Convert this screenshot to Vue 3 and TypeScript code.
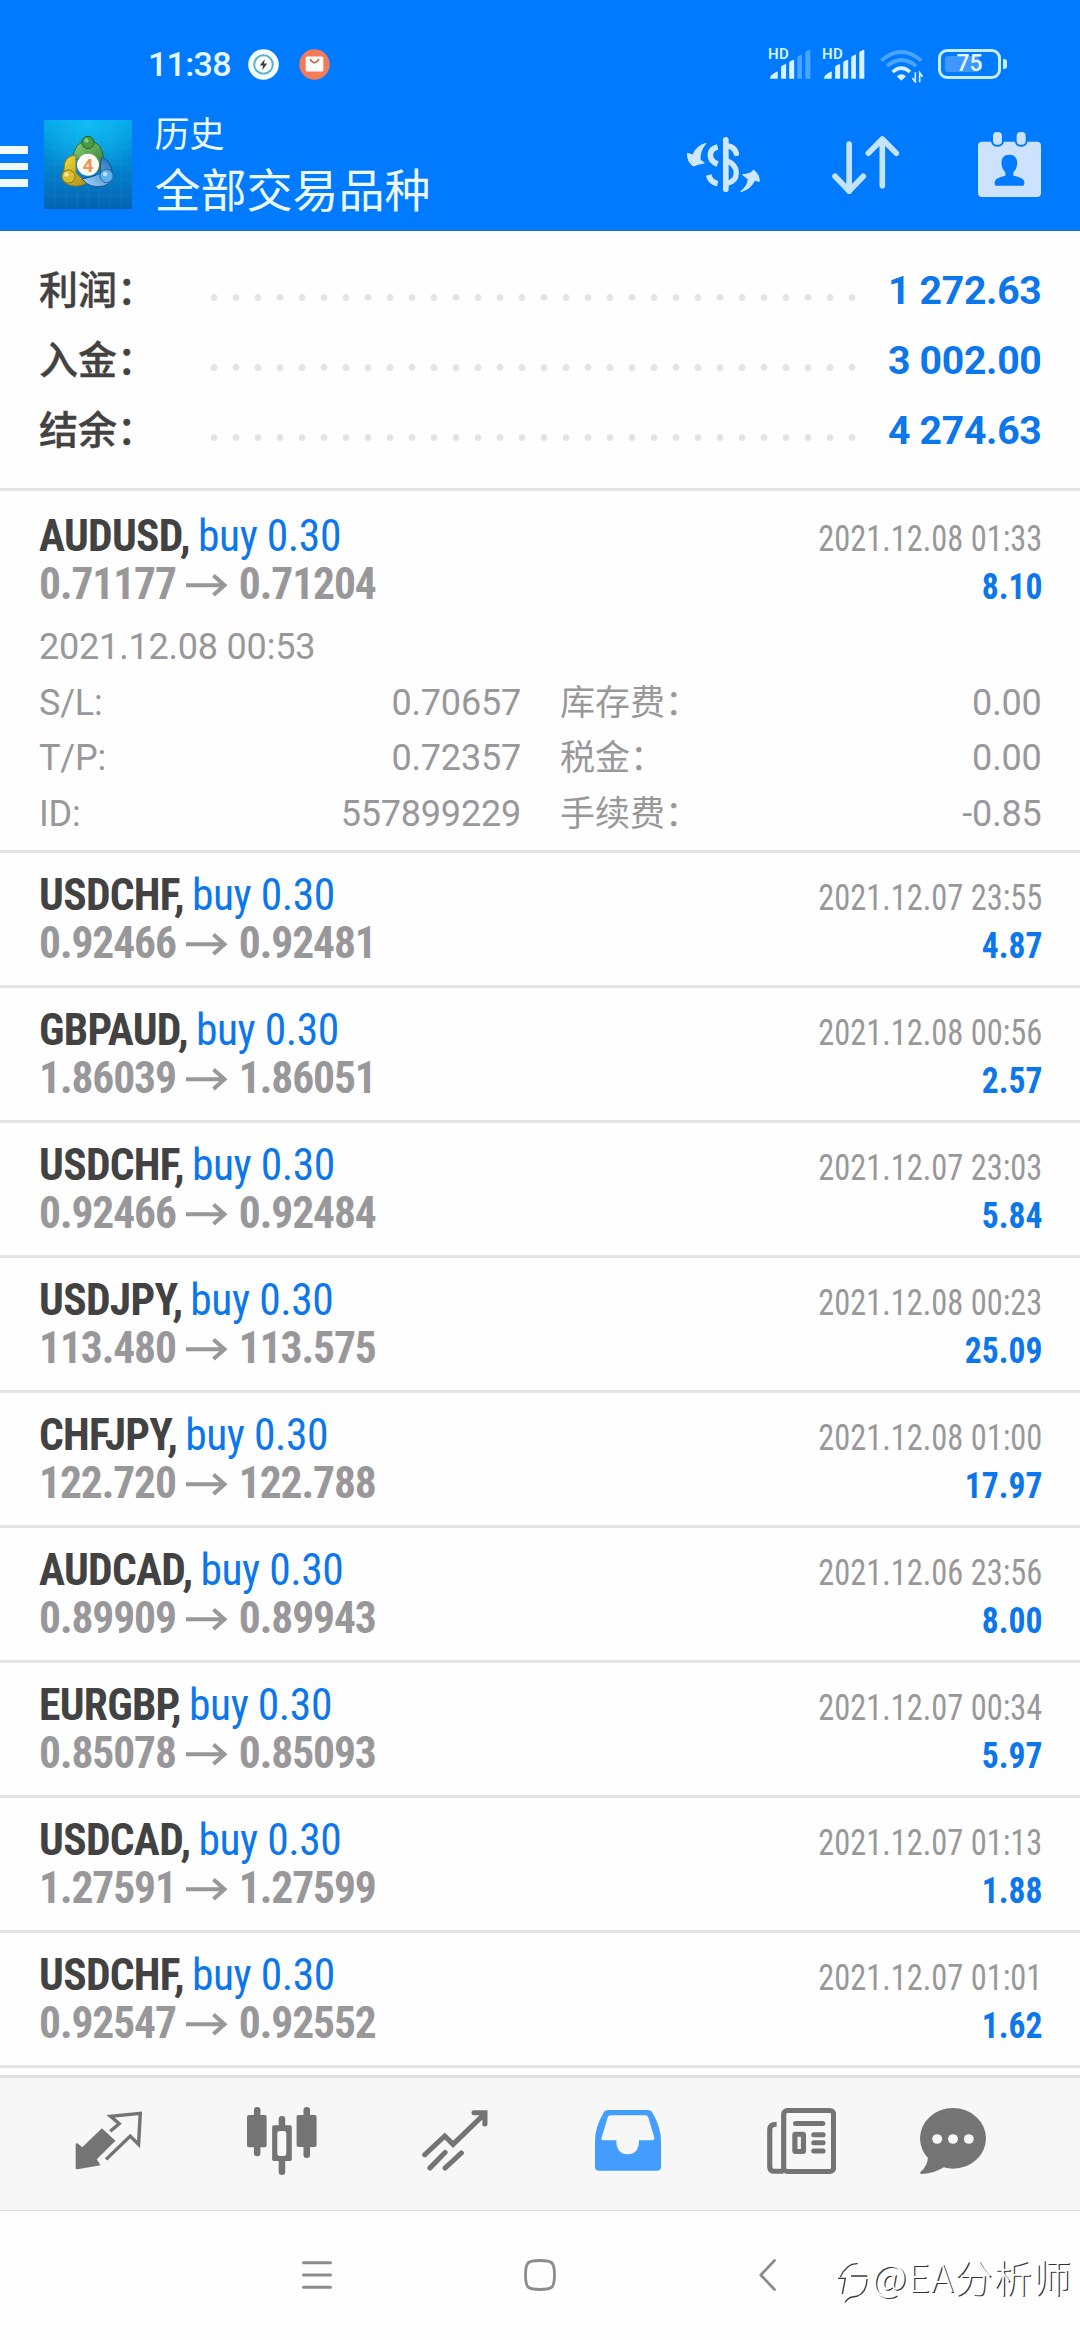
<script setup lang="ts">
interface Deal {
  symbol: string
  side: string
  open: string
  close: string
  time: string
  profit: string
}

interface Detail {
  label: string
  value: string
  label2: string
  value2: string
}

const totals: { label: string; value: string }[] = [
  { label: '利润：', value: '1 272.63' },
  { label: '入金：', value: '3 002.00' },
  { label: '结余：', value: '4 274.63' },
]

const deals: Deal[] = [
  { symbol: 'AUDUSD', side: 'buy 0.30', open: '0.71177', close: '0.71204', time: '2021.12.08 01:33', profit: '8.10' },
  { symbol: 'USDCHF', side: 'buy 0.30', open: '0.92466', close: '0.92481', time: '2021.12.07 23:55', profit: '4.87' },
  { symbol: 'GBPAUD', side: 'buy 0.30', open: '1.86039', close: '1.86051', time: '2021.12.08 00:56', profit: '2.57' },
  { symbol: 'USDCHF', side: 'buy 0.30', open: '0.92466', close: '0.92484', time: '2021.12.07 23:03', profit: '5.84' },
  { symbol: 'USDJPY', side: 'buy 0.30', open: '113.480', close: '113.575', time: '2021.12.08 00:23', profit: '25.09' },
  { symbol: 'CHFJPY', side: 'buy 0.30', open: '122.720', close: '122.788', time: '2021.12.08 01:00', profit: '17.97' },
  { symbol: 'AUDCAD', side: 'buy 0.30', open: '0.89909', close: '0.89943', time: '2021.12.06 23:56', profit: '8.00' },
  { symbol: 'EURGBP', side: 'buy 0.30', open: '0.85078', close: '0.85093', time: '2021.12.07 00:34', profit: '5.97' },
  { symbol: 'USDCAD', side: 'buy 0.30', open: '1.27591', close: '1.27599', time: '2021.12.07 01:13', profit: '1.88' },
  { symbol: 'USDCHF', side: 'buy 0.30', open: '0.92547', close: '0.92552', time: '2021.12.07 01:01', profit: '1.62' },
]

const openedAt = '2021.12.08 00:53'
const details: Detail[] = [
  { label: 'S/L:', value: '0.70657', label2: '库存费：', value2: '0.00' },
  { label: 'T/P:', value: '0.72357', label2: '税金：', value2: '0.00' },
  { label: 'ID:', value: '557899229', label2: '手续费：', value2: '-0.85' },
]
</script>

<template>
  <div class="screen">
    <header class="header">
      <div class="status">
        <span class="clock">11:38</span>
        <svg class="st-charge" width="31" height="31" viewBox="0 0 31 31">
          <circle cx="15.5" cy="15.5" r="15.3" fill="#f3fdff" />
          <circle cx="15.5" cy="15.5" r="9.3" fill="#fff" stroke="#5bb5c4" stroke-width="2" />
          <path d="M16.8 10l-5 6.4h3.2l-.8 4.8 5-6.6h-3.2z" fill="#3a3f45" />
        </svg>
        <svg class="st-mail" width="31" height="31" viewBox="0 0 31 31">
          <circle cx="15.5" cy="15.5" r="15.2" fill="#f47b57" />
          <rect x="6.7" y="7.5" width="17.6" height="15" rx="1.5" fill="#fff" />
          <path d="M11 10q4.5 7.5 9 0" fill="none" stroke="#c9604a" stroke-width="1.5" />
        </svg>
        <div class="st-right">
          <div class="sim">
            <span class="hd">HD</span>
            <svg width="41" height="30" viewBox="390 55 122 90" preserveAspectRatio="none">
              <path fill="#d6f3ff" d="M390 144q0-12 23-22v22zM423 144v-35q0-4 15-9v44zM447 144V96q2-6 15-9v57z" />
              <path fill="#4aa5ff" d="M471 144V80q2-5 14-9v73zM495 144V66q2-6 15-9v87z" />
            </svg>
          </div>
          <div class="sim second">
            <span class="hd">HD</span>
            <svg width="41" height="30" viewBox="390 55 122 90" preserveAspectRatio="none">
              <path fill="#d6f3ff" d="M390 144q0-12 23-22v22zM423 144v-35q0-4 15-9v44zM447 144V96q2-6 15-9v57zM471 144V80q2-5 14-9v73zM495 144V66q2-6 15-9v87z" />
            </svg>
          </div>
          <svg class="wifi" width="43" height="34" viewBox="719 56 129 102">
            <g fill="none" stroke-width="11">
              <path d="M723 91q60-52 120 0" stroke="#4aa5ff" />
              <path d="M740 107q43-36 87 0" stroke="#4aa5ff" />
              <path d="M757 125q26-23 52 0" stroke="#d6f3ff" />
            </g>
            <path d="M769 138q14-12 28 0l-14 13z" fill="#d6f3ff" />
            <path d="M825 126v29l-9-12M838 156v-29l9 12" fill="none" stroke="#d6f3ff" stroke-width="5" />
          </svg>
          <div class="battery">
            <i class="level"></i>
            <span>75</span>
          </div>
          <i class="nub"></i>
        </div>
      </div>
      <div class="appbar">
        <div class="burger"><i></i><i></i><i></i></div>
        <svg class="logo" width="88" height="89" viewBox="0 0 88 89">
          <defs>
            <linearGradient id="sky" x1="0" y1="0" x2="0" y2="1">
              <stop offset="0" stop-color="#06a5e6" />
              <stop offset=".5" stop-color="#0386d0" />
              <stop offset="1" stop-color="#0462b0" />
            </linearGradient>
            <radialGradient id="glow" cx=".5" cy=".05" r=".6">
              <stop offset="0" stop-color="#12c2f5" stop-opacity=".8" />
              <stop offset="1" stop-color="#12c2f5" stop-opacity="0" />
            </radialGradient>
            <linearGradient id="green" x1="0" y1="0" x2="1" y2="1">
              <stop offset="0" stop-color="#8ed07a" />
              <stop offset="1" stop-color="#237a2c" />
            </linearGradient>
            <linearGradient id="gold" x1="0" y1="0" x2="1" y2="1">
              <stop offset="0" stop-color="#f7e23c" />
              <stop offset="1" stop-color="#a88d16" />
            </linearGradient>
            <linearGradient id="azure" x1="0" y1="1" x2="1" y2="0">
              <stop offset="0" stop-color="#a9dcff" />
              <stop offset="1" stop-color="#1769b8" />
            </linearGradient>
          </defs>
          <rect width="88" height="89" fill="url(#sky)" />
          <rect width="88" height="89" fill="url(#glow)" />
          <path d="M11 0v89M22 0v89M33 0v89M44 0v89M55 0v89M66 0v89M77 0v89M0 12h88M0 28h88M0 44h88M0 60h88M0 76h88" stroke="#4fc0f0" stroke-opacity=".12" />
          <path d="M29 41Q29 21 44 21t16 19q0 8-5 12L44 34z" fill="url(#green)" stroke="#2c6b45" />
          <path d="M32 35q-13 1-12 15-6 10 5 15 10 3 18-2L32 53z" fill="url(#gold)" stroke="#7c7636" />
          <path d="M38 59q8 10 22 7 11-4 8-14-1-11-10-15-3 9-1 16-8 4-19 6z" fill="url(#azure)" stroke="#1a4f8b" />
          <circle cx="44" cy="22.5" r="6.2" fill="#479b45" stroke="#236331" />
          <circle cx="24.5" cy="56.5" r="6.6" fill="#d9bd2c" stroke="#867423" />
          <circle cx="62.5" cy="56" r="6.6" fill="#60b0ea" stroke="#2868a5" />
          <circle cx="22.5" cy="54.5" r="2.3" fill="#f5e899" />
          <circle cx="61" cy="54" r="2.3" fill="#b1e1ff" />
          <circle cx="42.500" cy="20.500" r="2.200" fill="#87ca7e" />
          <circle cx="44" cy="44.800" r="11" fill="#fcfaf6" />
          <text x="44" y="51.500" text-anchor="middle" class="four">4</text>
        </svg>
        <div class="titles">
          <div class="t1">历史</div>
          <div class="t2">全部交易品种</div>
        </div>
        <svg class="ic-dollar" width="73.300" height="55.700" viewBox="18 47 220 167">
          <g fill="none" stroke="#cfe8ff">
            <path d="M134.500 55.500V204" stroke-width="17" stroke-linecap="round" />
            <path d="M110 77Q88 82 88 101t22 27" stroke-width="17" />
            <path d="M83 161q5 21 27 26" stroke-width="17" />
            <path d="M141 74q20 3 25 22" stroke-width="17" stroke-linecap="round" />
            <path d="M138 118q28 12 28 36 0 26-28 32" stroke-width="16" />
          </g>
          <g fill="#cfe8ff" stroke="#cfe8ff" stroke-width="3" stroke-linejoin="round">
            <path d="M75 66Q45 74 36 101l-17-5q1 28 18 38 17-7 33-9l-13-10q-1-27 18-49z" />
            <path d="M179 211q21-17 23-37l-17-14q28-2 32-14 18 12 18 34l-14-3q-12 27-42 34z" />
          </g>
        </svg>
        <svg class="ic-sort" width="67.300" height="58" viewBox="574 317 202 174">
          <path d="M625.500 341v142M583 438l42.500 44L668 438M725 466V326M683 369l42-43 42 43" fill="none" stroke="#c5e3ff" stroke-width="17" stroke-linecap="round" stroke-linejoin="round" />
        </svg>
        <svg class="ic-cal" width="63" height="65" viewBox="1010 305 189 195">
          <rect x="1010" y="334" width="189" height="166" rx="12" fill="#cde2ff" />
          <rect x="1049" y="298" width="39" height="51" rx="17" fill="#007aff" />
          <rect x="1120" y="298" width="39" height="51" rx="17" fill="#007aff" />
          <rect x="1055" y="305" width="27" height="38" rx="12" fill="#cde2ff" />
          <rect x="1126" y="305" width="27" height="38" rx="12" fill="#cde2ff" />
          <path d="M1104 373c-18 0-26 14-23 31 2 13 8 17 11 22v10q-32 6-32 20v5q0 5 5 5h79q5 0 5-5v-5q0-14-33-20v-10c4-5 9-9 11-22 3-17-5-31-23-31z" fill="#007aff" />
        </svg>
      </div>
    </header>

    <section class="totals">
      <div v-for="t in totals" :key="t.label" class="total">
        <span class="total-label">{{ t.label }}</span>
        <span class="dots"></span>
        <span class="total-value">{{ t.value }}</span>
      </div>
    </section>

    <main class="list">
      <article v-for="(d, i) in deals" :key="i" class="deal" :class="{ open: i === 0 }">
        <div class="main">
          <div class="left">
            <div class="line"><b class="sym">{{ d.symbol }},</b> <span class="side">{{ d.side }}</span></div>
            <div class="line price">
              <span>{{ d.open }}</span>
              <svg width="42" height="24" viewBox="0 0 42 24">
                <path d="M0 12.300h37M27.500 2.500L38.500 12.300 27.500 22" fill="none" stroke="#98989a" stroke-width="4" />
              </svg>
              <span>{{ d.close }}</span>
            </div>
          </div>
          <div class="right">
            <div class="line date">{{ d.time }}</div>
            <div class="line profit">{{ d.profit }}</div>
          </div>
        </div>
        <div v-if="i === 0" class="details">
          <div class="opened">{{ openedAt }}</div>
          <div v-for="r in details" :key="r.label" class="drow">
            <div class="pair first"><span>{{ r.label }}</span><span>{{ r.value }}</span></div>
            <div class="pair"><span class="cjk">{{ r.label2 }}</span><span>{{ r.value2 }}</span></div>
          </div>
        </div>
      </article>
    </main>

    <nav class="tabs">
      <svg width="67" height="58.700" viewBox="218 188 194 176" preserveAspectRatio="none">
        <path d="M220 286l4-2 15 13 57-57 39 37-54 56 11 18-67 12q-5 0-5-5z" fill="#747474" />
        <path d="M320 249l26-23-25-22 86-9-5 93-24-25-70 70" fill="none" stroke="#747474" stroke-width="10" />
      </svg>
      <svg width="69.600" height="68" viewBox="715 174 202 204" preserveAspectRatio="none">
        <g fill="#747474">
          <rect x="735" y="174" width="19" height="148" rx="9" />
          <rect x="715" y="198" width="57" height="97" rx="6" />
          <rect x="879" y="174" width="19" height="153" rx="9" />
          <rect x="859" y="198" width="58" height="96" rx="6" />
          <rect x="807" y="201" width="19" height="177" rx="9" />
          <rect x="788" y="229" width="57" height="107" rx="5" />
        </g>
        <rect x="803" y="246" width="26" height="75" rx="7" fill="#f7f7f7" />
      </svg>
      <svg width="65.500" height="60.700" viewBox="1223 182 190 182" preserveAspectRatio="none">
        <path d="M1231 316l58-56 24 25 92-92M1374 190h31.500v34M1246 356l44-47M1290 356l47-45" fill="none" stroke="#747474" stroke-width="15" stroke-linecap="round" />
      </svg>
      <svg width="66" height="60.700" viewBox="159 182 192 182" preserveAspectRatio="none">
        <path fill="#429dff" fill-rule="evenodd" d="M198 182H312Q322 182 327 192Q351 235 351 275V352Q351 364 339 364H171Q159 364 159 352V275Q159 235 183 192Q188 182 198 182zM205 198H305Q312 198 314 204L332 266Q332 273 325 273H287Q287 315 254 315T221 273H184Q176 273 178 266L196 204Q198 198 205 198z" />
      </svg>
      <svg width="69.500" height="66" viewBox="657 174 202 198" preserveAspectRatio="none">
        <g fill="none" stroke="#747474" stroke-width="15">
          <rect x="705.500" y="181.500" width="145" height="183" rx="11" />
          <path d="M685 223q-20 0-20 15v112q0 14 14 14h26" />
          <rect x="738" y="252.500" width="25" height="52" rx="2" />
          <path d="M740 220.500h79M793 254h27M793 278.500h27M793 303h27" stroke-linecap="round" />
        </g>
      </svg>
      <svg width="66" height="66" viewBox="1103 174 192 198" preserveAspectRatio="none">
        <ellipse cx="1199" cy="265" rx="96" ry="91" fill="#747474" />
        <path d="M1127 316q-2 34-22 49-5 7 4 7 36-1 68-23z" fill="#747474" />
        <g fill="#f7f7f7">
          <circle cx="1153" cy="267" r="14.500" />
          <circle cx="1199" cy="267" r="14.500" />
          <circle cx="1245" cy="267" r="14.500" />
        </g>
      </svg>
    </nav>

    <footer class="sysnav">
      <svg width="30" height="28" viewBox="0 0 30 28">
        <path d="M1.500 1.700h27M1.500 14h27M1.500 26.300h27" stroke="#8c8c8c" stroke-width="3" stroke-linecap="round" />
      </svg>
      <svg width="32" height="32" viewBox="0 0 32 32">
        <path d="M16 1.500c12 0 14.500 1.500 14.500 14.500S28 30.500 16 30.500 1.500 29 1.500 16 4 1.500 16 1.500z" fill="none" stroke="#8c8c8c" stroke-width="2.800" />
      </svg>
      <svg class="back" width="17" height="32" viewBox="0 0 17 32">
        <path d="M15.500 1.500L1.800 16l13.700 14.500" fill="none" stroke="#8c8c8c" stroke-width="2.800" stroke-linecap="round" stroke-linejoin="round" />
      </svg>
    </footer>

    <div class="mark">
      <svg width="34" height="46" viewBox="0 0 102 138">
        <path d="M10 60Q30 18 62 20M3 64h22l-9 47M42 57h49M90 66Q88 118 46 120 34 122 24 136" fill="none" stroke="#3a3a3a" stroke-width="4" />
      </svg>
      <span>@EA分析师</span>
    </div>
  </div>
</template>

<style>
body {
  background: #fefefe;
}
</style>

<style scoped>
.screen {
  position: relative;
  display: flex;
  flex-direction: column;
  width: 1080px;
  height: 2340px;
  overflow: hidden;
  background: #fefefe;
  font-family: Roboto, "Noto Sans CJK SC", sans-serif;
}
svg {
  display: block;
  flex: none;
}
.header {
  flex: none;
  box-sizing: border-box;
  height: 231px;
  background: #007aff;
  border-bottom: 1px solid #1b6fc4;
}
.status {
  box-sizing: border-box;
  display: flex;
  align-items: center;
  height: 110px;
  padding: 18px 73px 0 148px;
}
.clock {
  width: 80px;
  font-size: 34px;
  line-height: 40px;
  font-weight: 500;
  letter-spacing: -0.700px;
  color: #e4f7ff;
  white-space: nowrap;
}
.st-charge {
  margin-left: 20px;
}
.st-mail {
  margin-left: 20px;
}
.st-right {
  display: flex;
  align-items: center;
  margin-left: auto;
}
.sim {
  position: relative;
}
.sim.second {
  margin-left: 13px;
}
.hd {
  position: absolute;
  left: -2px;
  top: -4px;
  font-size: 15px;
  line-height: 18px;
  font-weight: 600;
  letter-spacing: 0.5px;
  color: #d6f3ff;
}
.wifi {
  margin: 3px 0 0 15px;
}
.battery {
  position: relative;
  box-sizing: border-box;
  width: 63px;
  height: 30px;
  margin-left: 15px;
  border: 3px solid #c4eeff;
  border-radius: 9px;
  color: #e4f7ff;
  font-size: 23px;
  line-height: 24px;
  font-weight: 500;
  text-align: center;
}
.battery span {
  position: relative;
}
.level {
  position: absolute;
  left: 4px;
  top: 4px;
  width: 34px;
  height: 16px;
  border-radius: 3px;
  background: #3f97ff;
}
.nub {
  width: 4px;
  height: 10px;
  margin-left: 2px;
  border-radius: 0 3px 3px 0;
  background: #c4eeff;
}
.appbar {
  box-sizing: border-box;
  display: flex;
  align-items: center;
  height: 120px;
  padding-bottom: 11px;
}
.burger {
  display: flex;
  flex-direction: column;
  gap: 9.300px;
  width: 28px;
  padding-top: 4px;
}
.burger i {
  height: 7.400px;
  background: #eef9ff;
}
.logo {
  margin-left: 16px;
}
.four {
  font: 700 19px Roboto, sans-serif;
  fill: #ee9450;
}
.titles {
  align-self: flex-start;
  width: 290px;
  margin: 5px 0 0 22.500px;
  color: #ebf9ff;
  white-space: nowrap;
}
.t1 {
  font-size: 35px;
  line-height: 42px;
}
.t2 {
  margin-top: 4px;
  font-size: 46px;
  line-height: 60px;
}
.ic-dollar {
  margin-left: 242px;
}
.ic-sort {
  margin-left: 72.500px;
}
.ic-cal {
  margin-left: 78px;
}
.totals {
  flex: none;
  box-sizing: border-box;
  height: 260px;
  padding: 25px 38.500px 0 39px;
  border-bottom: 3px solid #e4e4e4;
}
.total {
  display: flex;
  height: 70px;
  font-size: 39px;
  line-height: 70px;
}
.total-label {
  width: 163.500px;
  font-weight: 500;
  color: #424242;
  -webkit-text-stroke: 0.400px #424242;
}
.dots {
  width: 660px;
  height: 7px;
  margin-top: 38px;
  background: radial-gradient(circle at 11px 3.500px, #e3e3e3 3px, transparent 3.800px) 0 0 / 22px 7px repeat-x;
}
.total-value {
  margin-left: auto;
  font-size: 39.200px;
  font-weight: 700;
  letter-spacing: -0.300px;
  color: #0c77ea;
}
.list {
  flex: 1;
  min-height: 0;
  overflow: hidden;
  font-family: "Roboto Condensed", Roboto, sans-serif;
}
.deal {
  box-sizing: border-box;
  height: 135px;
  padding: 18.500px 38px 0 39px;
  border-bottom: 3px solid #e4e4e4;
}
.deal.open {
  height: 362px;
  padding-top: 21.500px;
}
.main {
  display: flex;
  justify-content: space-between;
}
.line {
  height: 48px;
  font-size: 43.500px;
  line-height: 48px;
  white-space: nowrap;
}
.sym {
  font-weight: 700;
  letter-spacing: -0.700px;
  margin-right: -2px;
  color: #424242;
}
.side {
  letter-spacing: -0.450px;
  color: #0c77ea;
}
.price {
  display: flex;
  align-items: center;
  gap: 10.500px;
  font-weight: 700;
  letter-spacing: -1.100px;
  color: #98989a;
}
.right {
  text-align: right;
}
.right .line {
  font-size: 36.500px;
  line-height: 52px;
  transform-origin: 100% 50%;
}
.right .date {
  color: #98989a;
  transform: scaleX(0.888);
}
.right .profit {
  font-weight: 700;
  color: #0c77ea;
  transform: scaleX(0.92);
}
.details {
  font-family: Roboto, "Noto Sans CJK SC", sans-serif;
  font-size: 36px;
  line-height: 55.500px;
  font-weight: 400;
  letter-spacing: -0.200px;
  color: #98989a;
}
.opened {
  margin-top: 11.500px;
}
.drow {
  display: flex;
}
.drow .pair {
  display: flex;
  justify-content: space-between;
  width: 481.500px;
}
.drow .first {
  width: 482px;
  margin-right: 39px;
}
.pair .cjk {
  font-size: 35px;
  letter-spacing: 0;
}
.tabs {
  flex: none;
  box-sizing: border-box;
  display: grid;
  grid-template-columns: repeat(5, 173.200px) 131px;
  align-items: center;
  justify-items: center;
  height: 136px;
  padding: 0 0 7px 22px;
  background: #f7f7f7;
  border-top: 3px solid #e0e0e0;
  border-bottom: 1px solid #dedede;
}
.sysnav {
  flex: none;
  box-sizing: border-box;
  display: grid;
  grid-template-columns: repeat(3, 223px);
  align-items: center;
  justify-items: center;
  height: 129px;
  padding: 0 0 1px 205.500px;
}
.back {
  margin-left: 8px;
}
.mark {
  position: absolute;
  left: 837px;
  top: 2254px;
  display: flex;
  color: #fff;
  font-family: "Noto Sans CJK SC", sans-serif;
  font-size: 38px;
  line-height: 44px;
  font-weight: 300;
  letter-spacing: 1.200px;
  text-shadow: 1.200px 1.200px 0.500px #333;
  white-space: nowrap;
}
.mark svg {
  margin-top: 3px;
}
.mark span {
  margin-left: 1px;
}
</style>
